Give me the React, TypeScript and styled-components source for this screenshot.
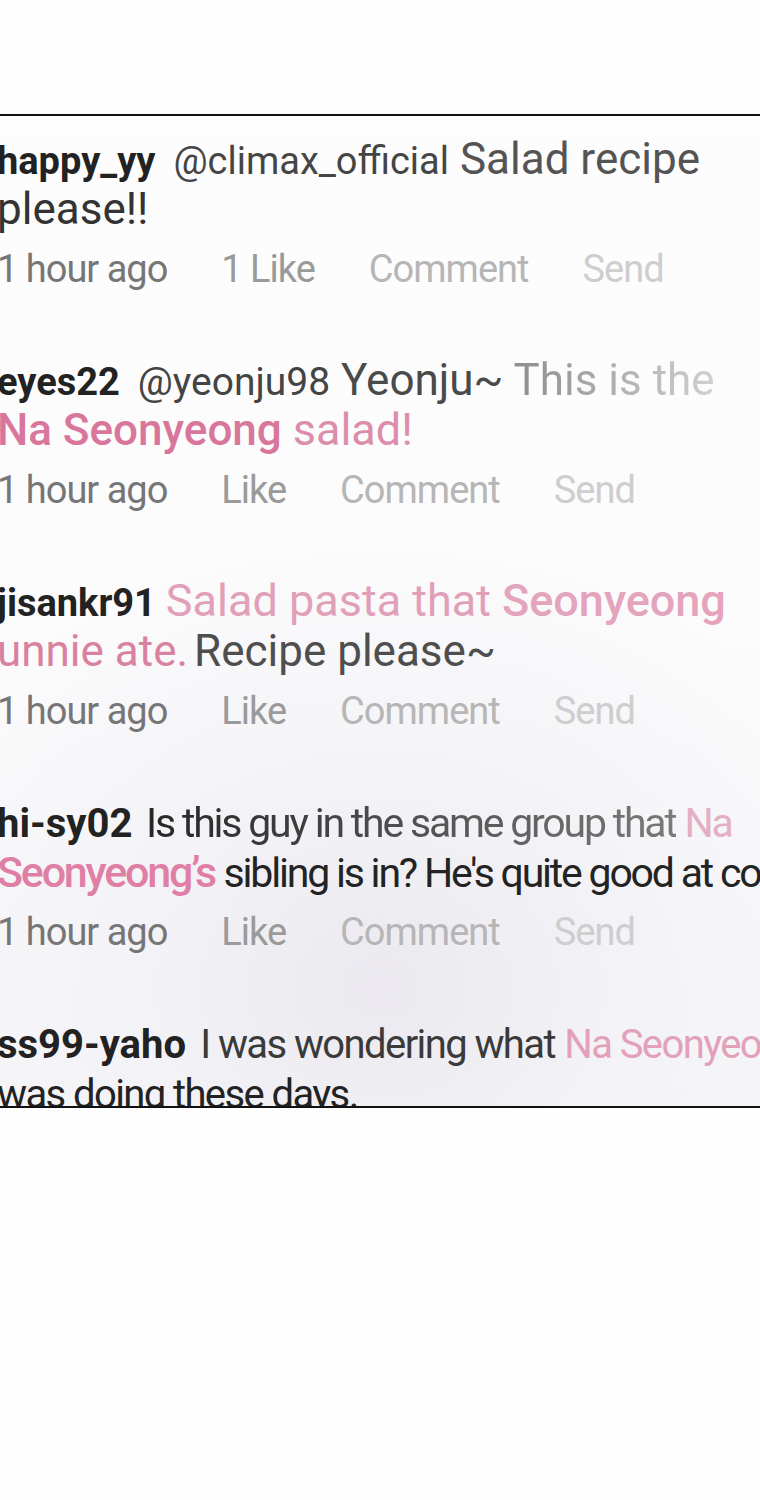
import React from 'react';
import styled, { createGlobalStyle } from 'styled-components';

// one run of text inside a comment line
type Seg = { t: string; c?: string; w?: number; s?: number; user?: boolean; fade?: string; glue?: number };
type CommentData = { likes: string; tight?: number; userGap: number; userSize?: number; lines: Seg[][] };

const comments: CommentData[] = [
  {
    likes: '1 Like',
    userGap: 7,
    lines: [
      [{ t: 'happy_yy', user: true }, { t: '@climax_official', c: '#454545', s: 38 }, { t: 'Salad recipe', c: '#545454' }],
      [{ t: 'please!!', c: '#333' }],
    ],
  },
  {
    likes: 'Like',
    userGap: 7,
    lines: [
      [
        { t: 'eyes22', user: true },
        { t: '@yeonju98', c: '#444', s: 39 },
        { t: 'Yeonju~', c: '#4a4a4a' },
        { t: 'This is the', fade: 'linear-gradient(90deg, #8e8e8e, #d0d0d0)' },
      ],
      [{ t: 'Na Seonyeong', c: '#d8769c', w: 500 }, { t: 'salad!', c: '#dc8dab', s: 45 }],
    ],
  },
  {
    likes: 'Like',
    userGap: -1,
    lines: [
      [
        { t: 'jisankr91', user: true },
        { t: 'Salad pasta that', c: '#e1a0b8', s: 45 },
        { t: 'Seonyeong', c: '#e3a4bc', s: 45, w: 500 },
      ],
      [{ t: 'unnie ate.', c: '#d9829f' }, { t: 'Recipe please~', c: '#4e4e4e', glue: 6 }],
    ],
  },
  {
    likes: 'Like',
    tight: -2.2,
    userGap: 5,
    userSize: 40,
    lines: [
      [
        { t: 'hi-sy02', user: true },
        { t: 'Is this guy in the same group that', fade: 'linear-gradient(90deg, #262626, #7a7a7a)', s: 41 },
        { t: 'Na', c: '#e4afc3', s: 41 },
      ],
      [{ t: 'Seonyeong\u2019s', c: '#e07fa5', s: 43, w: 500 }, { t: "sibling is in? He's quite good at cooking", c: '#232323', s: 41 }],
    ],
  },
  {
    likes: 'Like',
    tight: -1.6,
    userGap: 5,
    userSize: 40,
    lines: [
      [
        { t: 'ss99-yaho', user: true },
        { t: 'I was wondering what', c: '#3a3a3a', s: 40 },
        { t: 'Na Seonyeong', c: '#e2a1b9', s: 40 },
      ],
      [{ t: 'was doing these days.', c: '#222', s: 40 }],
    ],
  },
];

const metaTones = ['#767676', '#9a9a9a', '#b6b6b6', '#cecece'];

const App = () => {
  return (
    <>
      <GlobalStyle />
      <Page>
        <Panel>
          <List>
            {comments.map((comment, i) => (
              <Comment key={i}>
                {comment.lines.map((line, j) => (
                  <TextLine key={j} $tight={comment.tight || 0}>
                    {line.map((seg, k) => (
                      <React.Fragment key={k}>
                        {k > 0 && seg.glue === undefined && ' '}
                        {seg.user ? (
                          <User $gap={comment.userGap} $size={comment.userSize || 38}>
                            {seg.t}
                          </User>
                        ) : seg.fade ? (
                          <Fade $bg={seg.fade} $size={seg.s || 44}>
                            {seg.t}
                          </Fade>
                        ) : (
                          <Seg
                            $color={seg.c || '#333'}
                            $size={seg.s || 44}
                            $weight={seg.w || 400}
                            $glue={seg.glue || 0}
                          >
                            {seg.t}
                          </Seg>
                        )}
                      </React.Fragment>
                    ))}
                  </TextLine>
                ))}
                <Meta>
                  {['1 hour ago', comment.likes, 'Comment', 'Send'].map((label, k) => (
                    <MetaItem key={k} $color={metaTones[k]}>
                      {label}
                    </MetaItem>
                  ))}
                </Meta>
              </Comment>
            ))}
          </List>
        </Panel>
      </Page>
    </>
  );
};

export default App;

const GlobalStyle = createGlobalStyle`
  body {
    margin: 0;
    background: #fefefe;
    font-family: Roboto, "Liberation Sans", sans-serif;
  }
`;

const Page = styled.div`
  width: 760px;
  height: 1500px;
  padding-top: 114px;
  box-sizing: border-box;
  overflow: hidden;
`;

const Panel = styled.div`
  height: 994px;
  box-sizing: border-box;
  border-top: 2px solid #111;
  border-bottom: 2px solid #111;
  overflow: hidden;
  padding-top: 18px;
  background:
    radial-gradient(ellipse 70% 45% at 50% 88%, #ebe9ef 0%, #f3f2f6 45%, rgba(253, 253, 253, 0) 100%),
    linear-gradient(180deg, #fdfdfd 0%, #fbfbfc 60%, #f7f7f9 100%);
`;

const List = styled.div`
  margin-left: -3px;
`;

const Comment = styled.div`
  margin-bottom: 62px;
`;

const TextLine = styled.div<{ $tight: number }>`
  height: 50px;
  white-space: nowrap;
  font-size: 44px;
  line-height: 50px;
  letter-spacing: ${(p) => p.$tight}px;
`;

const User = styled.span<{ $gap: number; $size: number }>`
  font-size: ${(p) => p.$size}px;
  font-weight: 700;
  color: #222;
  letter-spacing: 0;
  margin-right: ${(p) => p.$gap}px;
`;

const Seg = styled.span<{ $color: string; $size: number; $weight: number; $glue: number }>`
  color: ${(p) => p.$color};
  font-size: ${(p) => p.$size}px;
  font-weight: ${(p) => p.$weight};
  margin-left: ${(p) => p.$glue}px;
`;

const Fade = styled.span<{ $bg: string; $size: number }>`
  font-size: ${(p) => p.$size}px;
  background: ${(p) => p.$bg};
  -webkit-background-clip: text;
  background-clip: text;
  color: transparent;
`;

const Meta = styled.div`
  display: flex;
  gap: 54px;
  height: 48px;
  margin-top: 11px;
  font-size: 38px;
  line-height: 48px;
  letter-spacing: -1px;
  white-space: nowrap;
`;

const MetaItem = styled.span<{ $color: string }>`
  color: ${(p) => p.$color};
`;
